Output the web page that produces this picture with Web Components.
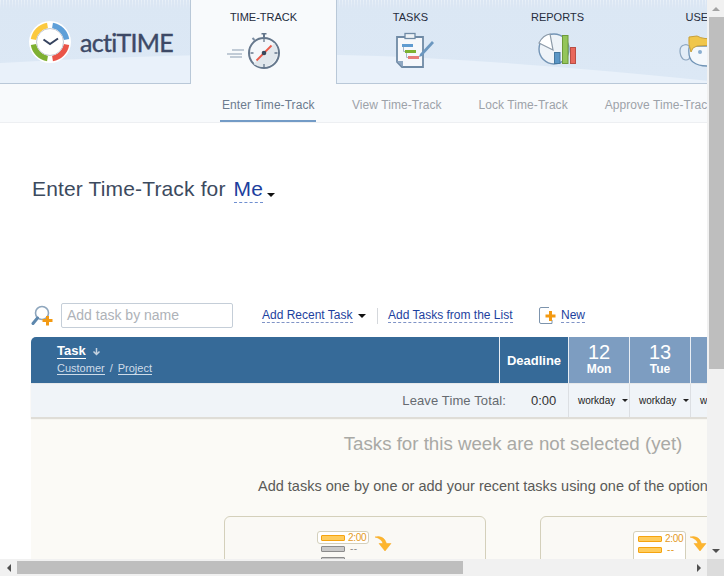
<!DOCTYPE html>
<html>
<head>
<meta charset="utf-8">
<title>actiTIME</title>
<style>
  html,body{margin:0;padding:0;height:100%;overflow:hidden;background:#fff;}
  body{font-family:"Liberation Sans",Arial,sans-serif;}
</style>
</head>
<body>
<at-window>
  <at-header>
    <at-logo slot="logo"></at-logo>
    <at-tab active label="TIME-TRACK"><svg width="80" height="40" viewBox="0 0 80 40">
      <path d="M8 18H20M3 22H18M6 25H18" stroke="#8a9bb0" stroke-width="1.200" fill="none"/>
      <path d="M28.500 6l2 2" stroke="#7d8ea3" stroke-width="2"/>
      <path d="M37.500 1h5v1.500H41v3h-2v-3h-1.500z" fill="#65778c"/>
      <circle cx="40" cy="21" r="15" fill="#f4f7fa" stroke="#65778c" stroke-width="2"/>
      <path d="M50.500 11A15 15 0 0 1 29.500 32z" fill="#e1e7ec"/>
      <path d="M40 7v3M40 32v3M26.500 21h3M50.500 21h3" stroke="#65778c" stroke-width="1.300"/>
      <path d="M32.500 28.500L47.500 13.500" stroke="#ea5a4a" stroke-width="1.800"/>
      <circle cx="40" cy="21" r="2.300" fill="#39485a"/>
    </svg></at-tab>
    <at-tab label="TASKS"><svg width="60" height="40" viewBox="-3 2 60 40">
      <path d="M13 7H39V37H18L13 32z" fill="#f6f8fb" stroke="#6f8aa5" stroke-width="1.800"/>
      <path d="M13 31l6 0 0 6z" fill="#8fa8c2"/>
      <rect x="21" y="3.500" width="10" height="5" fill="#eef2f6" stroke="#6f8aa5" stroke-width="1.300"/>
      <rect x="18" y="14" width="11" height="3" fill="#5f9bd0"/>
      <rect x="21" y="20" width="11" height="3" fill="#7db12f"/>
      <rect x="24" y="26" width="11" height="3" fill="#e77c78"/>
      <path d="M19.500 17v4.500h1.500M22.500 23v4.500h1.500" fill="none" stroke="#a9b7c5"/>
      <path d="M36 24L48 11l2 2L38 26l-3 1z" fill="#6b97bf"/>
    </svg></at-tab>
    <at-tab label="REPORTS"><svg width="60" height="40" viewBox="0 2 60 40">
      <circle cx="26" cy="19" r="15" fill="#eef3f8" stroke="#7394b5" stroke-width="1.400"/>
      <path d="M25 20L11 13Q15 5 22 4z" fill="#fff" stroke="#8c9aa8" stroke-width="1.200"/>
      <rect x="26.500" y="22.500" width="5.500" height="11" fill="#5a96c6" stroke="#44779f"/>
      <rect x="34.500" y="5.500" width="5.500" height="28" fill="#94c55a" stroke="#6e9a3a"/>
      <rect x="42.500" y="17.500" width="5" height="16" fill="#e9685c" stroke="#b84e45"/>
    </svg></at-tab>
    <at-tab label="USERS"><svg width="60" height="40" viewBox="0 0 60 40">
      <path d="M9 13q-4 1-4 6 0 5 3 8 3 2 6 0l2-6-2-7q-2-2-5-1z" fill="#e3edf7" stroke="#8da6bf" stroke-width="1.200"/>
      <path d="M14 16q-1 10 4 14 5 4 14 4h8V14H20z" fill="#f4f8fc" stroke="#6f93b5" stroke-width="1.300"/>
      <circle cx="25" cy="20" r="2" fill="#8aaed0"/>
      <path d="M14 5l8-1q7 4 18 2v7l-18 1-4 2-2 4q-3-8-2-15z" fill="#f0c64a" stroke="#c8a03a"/>
    </svg></at-tab>
  </at-header>

  <at-subnav>
    <at-subitem active>Enter Time-Track</at-subitem>
    <at-subitem>View Time-Track</at-subitem>
    <at-subitem>Lock Time-Track</at-subitem>
    <at-subitem>Approve Time-Track</at-subitem>
  </at-subnav>

  <at-title>Enter Time-Track for</at-title>
  <at-toolbar></at-toolbar>
  <at-grid-head></at-grid-head>
  <at-leave-row></at-leave-row>
  <at-empty></at-empty>
</at-window>

<script>
/* 小工具:用模板字符串建 shadow root */
function shadow(el, html) {
  const template = document.createElement("template");
  template.innerHTML = html;
  el.attachShadow({ mode: "open" }).appendChild(template.content.cloneNode(true));
}

/* 窗口外壳:内容区 + 两条假滚动条 */
class AtWindow extends HTMLElement {
  constructor() {
    super();
    shadow(this, /*html*/ `
      <style>
        :host{display:grid;grid-template-columns:707px 17px;grid-template-rows:559px 17px;width:724px;height:576px;}
        .view{overflow:hidden;background:#fff;}
        .inner{width:1027px;}
        .vbar{background:#f1f1f1;display:flex;flex-direction:column;align-items:flex-end;}
        .vbar .up{height:17px;width:17px;display:flex;align-items:center;justify-content:center;}
        .vbar .thumb{width:15px;height:352px;background:#bebebe;}
        .vbar .fill{flex:1;}
        .vbar .down{height:17px;width:17px;display:flex;align-items:center;justify-content:center;}
        .hbar{background:#f1f1f1;display:flex;align-items:center;}
        .hbar .left,.hbar .right{width:17px;height:17px;display:flex;align-items:center;justify-content:center;}
        .hbar .thumb{width:446px;height:13px;background:#bebebe;}
        .hbar .fill{flex:1;}
        .corner{background:#dcdcdc;}
        i{display:block;width:0;height:0;border-style:solid;border-color:transparent;}
        .t-up{border-width:0 4px 4px;border-bottom-color:#a3a3a3;margin-left:1px;}
        .t-down{border-width:4px 4px 0;border-top-color:#505050;margin-left:1px;}
        .t-left{border-width:4px 4px 4px 0;border-right-color:#505050;}
        .t-right{border-width:4px 0 4px 4px;border-left-color:#505050;}
      </style>
      <div class="view"><div class="inner"><slot></slot></div></div>
      <div class="vbar">
        <div class="up"><i class="t-up"></i></div><div class="thumb"></div><div class="fill"></div>
        <div class="down"><i class="t-down"></i></div>
      </div>
      <div class="hbar">
        <div class="left"><i class="t-left"></i></div><div class="thumb"></div><div class="fill"></div>
        <div class="right"><i class="t-right"></i></div>
      </div>
      <div class="corner"></div>`);
  }
}

/* 顶部蓝色条,弧形亮带是铺在下面的装饰 */
class AtHeader extends HTMLElement {
  constructor() {
    super();
    shadow(this, /*html*/ `
      <style>
        :host{display:block;position:relative;height:84px;}
        .bg{position:absolute;left:0;top:0;width:100%;height:83px;
            background:linear-gradient(#dbe7f4,#dce8f5);border-bottom:1px solid #b9c8d8;box-sizing:content-box;}
        .bg svg{position:absolute;left:0;top:0;}
        .dots{position:absolute;left:0;top:0;width:100%;height:9px;
            background:repeating-linear-gradient(to right,#e9f0f8 0,#e9f0f8 1px,#dbe6f3 1px,#dbe6f3 3px);
            -webkit-mask-image:linear-gradient(#000,transparent);mask-image:linear-gradient(#000,transparent);}
        .row{position:relative;display:flex;height:84px;}
        .logo{width:190px;flex:none;}
      </style>
      <div class="bg">
        <svg width="1027" height="83" viewBox="0 0 1027 83"><path d="M0 63Q190 52 340 55T730 83H0z" fill="#e9f1fa"/></svg>
        <div class="dots"></div>
      </div>
      <div class="row"><div class="logo"><slot name="logo"></slot></div><slot></slot></div>`);
  }
}

class AtLogo extends HTMLElement {
  constructor() {
    super();
    shadow(this, /*html*/ `
      <style>
        :host{display:flex;align-items:center;height:83px;padding-left:29px;gap:9px;box-sizing:border-box;}
        svg{flex:none;}
        span{font:25px Lato,"Noto Sans",sans-serif;letter-spacing:-.7px;color:#3d4966;-webkit-text-stroke:.4px #3d4966;white-space:nowrap;}
      </style>
      <svg width="42" height="42" viewBox="0 0 42 42">
        <circle cx="21" cy="21" r="21" fill="#fff"/>
        <g fill="none" stroke-width="5.500">
          <path d="M4.500 18.500A17 17 0 0 1 18.500 4.500" stroke="#fbc93f"/>
          <path d="M23.500 4.500A17 17 0 0 1 37.500 18.500" stroke="#5e9fd8"/>
          <path d="M37.500 23.500A17 17 0 0 1 23.500 37.500" stroke="#ea5448"/>
          <path d="M18.500 37.500A17 17 0 0 1 4.500 23.500" stroke="#7fb032"/>
        </g>
        <circle cx="21" cy="21" r="13.500" fill="#fff" stroke="#c5c9d2"/>
        <path d="M14.500 18.500L21 23L29 17.500" fill="none" stroke="#36435f" stroke-width="2"/>
      </svg>
      <span>actiTIME</span>`);
  }
}

class AtTab extends HTMLElement {
  constructor() {
    super();
    shadow(this, /*html*/ `
      <style>
        :host{display:block;width:147px;height:83px;box-sizing:border-box;flex:none;text-align:center;
              font-size:11px;color:#252c3c;padding-top:11px;}
        :host([active]){height:84px;background:#f8fafc;border-left:1px solid #b9c8d8;border-right:1px solid #b9c8d8;padding-top:11px;}
        .label{line-height:13px;height:13px;}
        .ic{height:40px;margin-top:8px;display:flex;justify-content:center;}
        ::slotted(svg){display:block;}
      </style>
      <div class="label"></div>
      <div class="ic"><slot></slot></div>`);
    this.shadowRoot.querySelector(".label").textContent = this.getAttribute("label");
  }
}

class AtSubnav extends HTMLElement {
  constructor() {
    super();
    shadow(this, /*html*/ `
      <style>
        :host{display:flex;height:39px;background:#f8fafc;border-bottom:1px solid #edeff2;box-sizing:border-box;padding-left:220px;gap:33px;}
      </style><slot></slot>`);
  }
}

class AtSubitem extends HTMLElement {
  constructor() {
    super();
    shadow(this, /*html*/ `
      <style>
        :host{display:block;height:38px;box-sizing:border-box;padding:14px 2px 0;font-size:12px;line-height:14px;letter-spacing:.06px;color:#9da2a9;white-space:nowrap;}
        :host([active]){color:#6c7b8e;border-bottom:2px solid #739bc6;width:96px;margin-right:1px;}
      </style><slot></slot>`);
  }
}

class AtTitle extends HTMLElement {
  constructor() {
    super();
    shadow(this, /*html*/ `
      <style>
        :host{display:flex;align-items:flex-start;height:180px;box-sizing:border-box;padding:54px 0 0 32px;
              font-size:21px;line-height:24px;letter-spacing:.15px;color:#3c4a5e;}
        .me{margin-left:8px;color:#1d3f9e;border-bottom:1px dashed #6f8fd0;height:25px;}
        .arr{width:0;height:0;border:4px solid transparent;border-top-color:#111;border-bottom:0;margin:16px 0 0 4px;}
      </style>
      <span><slot></slot></span><span class="me">Me</span><span class="arr"></span>`);
  }
}

class AtDash extends HTMLElement {
  constructor() {
    super();
    shadow(this, /*html*/ `
      <style>
        :host{display:inline-block;font-size:12px;line-height:14px;color:#1d3f9e;border-bottom:1px dashed #7f93c6;white-space:nowrap;}
      </style><slot></slot>`);
  }
}

class AtToolbar extends HTMLElement {
  constructor() {
    super();
    shadow(this, /*html*/ `
      <style>
        :host{display:flex;align-items:center;height:25px;margin-bottom:9px;padding-left:31px;}
        svg{display:block;flex:none;}
        .box{width:172px;height:25px;box-sizing:border-box;margin-left:8px;border:1px solid #c5ced8;border-radius:2px;
             padding-left:5px;font-size:14px;line-height:23px;color:#aeb2b8;}
        .recent{margin-left:29px;}
        .arr{width:0;height:0;border:4px solid transparent;border-top-color:#111;border-bottom:0;margin-left:5px;}
        .sep{width:1px;height:16px;background:#d5d8dc;margin:0 10.500px 0 11px;}
        .ni{margin-left:26px;margin-right:5.500px;}
      </style>
      <svg width="22" height="24" viewBox="0 0 22 24">
        <circle cx="11" cy="9" r="6.500" fill="#fff" stroke="#8ea6bd" stroke-width="1.600"/>
        <path d="M6.500 14L2 19.500" stroke="#5d87ad" stroke-width="3" stroke-linecap="round"/>
        <path d="M15 15v-3h3v3h3.500v3H18v3.500h-3V18h-3.500v-3z" fill="#f39a12"/>
      </svg>
      <div class="box">Add task by name</div>
      <at-dash class="recent">Add Recent Task</at-dash><span class="arr"></span>
      <span class="sep"></span>
      <at-dash>Add Tasks from the List</at-dash>
      <svg class="ni" width="17" height="17" viewBox="0 0 17 17">
        <path d="M10 .5H2A1.500 1.500 0 0 0 .5 2v13A1.500 1.500 0 0 0 2 16.500h11V13" fill="#fff" stroke="#7d94ad"/>
        <path d="M10 4h3v3.500h3.500v3H13V14h-3v-3.500H6.500v-3H10z" fill="#f39a12"/>
      </svg>
      <at-dash>New</at-dash>`);
  }
}

class AtDay extends HTMLElement {
  constructor() {
    super();
    shadow(this, /*html*/ `
      <style>
        :host{display:flex;flex-direction:column;align-items:center;justify-content:center;background:#7d9dc1;color:#fff;width:60px;flex:none;
              border-left:1px solid #e9eef4;}
        .n{font-size:20px;line-height:19px;margin-top:-1px;}
        .d{font-size:12px;font-weight:bold;line-height:14px;}
      </style>
      <div class="n"></div><div class="d"></div>`);
    this.shadowRoot.querySelector(".n").textContent = this.getAttribute("n");
    this.shadowRoot.querySelector(".d").textContent = this.getAttribute("d");
  }
}

/* 表头 */
class AtGridHead extends HTMLElement {
  constructor() {
    super();
    shadow(this, /*html*/ `
      <style>
        :host{display:flex;height:46px;margin-left:31px;width:964px;background:#366a98;border-top-left-radius:5px;border-top-right-radius:5px;color:#fff;overflow:hidden;}
        .task{width:468px;flex:none;box-sizing:border-box;padding:7px 0 0 26px;}
        .t{display:flex;align-items:center;font-size:13px;font-weight:bold;line-height:14px;}
        .t b{border-bottom:1px solid #fff;}
        .t svg{margin-left:6px;}
        .s{font-size:11px;line-height:12px;color:#cfdce9;margin-top:3px;display:flex;}
        .s u{text-decoration:none;border-bottom:1px solid #cfdce9;}
        .s span{margin:0 5px;}
        .dl{width:69px;flex:none;box-sizing:border-box;border-left:1px solid #e9eef4;font-size:13px;font-weight:bold;
            display:flex;align-items:center;justify-content:center;}
      </style>
      <div class="task">
        <div class="t"><b>Task</b><svg width="9" height="9" viewBox="0 0 9 9"><path d="M4.500 1v6M1.500 4.500l3 3 3-3" fill="none" stroke="#c6d3e0" stroke-width="1.500"/></svg></div>
        <div class="s"><u>Customer</u><span>/</span><u>Project</u></div>
      </div>
      <div class="dl">Deadline</div>
      <at-day n="12" d="Mon"></at-day>
      <at-day n="13" d="Tue"></at-day>
      <at-day></at-day>
      <at-day></at-day>
      <at-day></at-day>`);
  }
}

class AtKind extends HTMLElement {
  constructor() {
    super();
    shadow(this, /*html*/ `
      <style>
        :host{display:flex;align-items:center;width:60px;box-sizing:content-box;flex:none;border-left:1px solid #dcdfe3;font-size:10px;color:#222;padding-left:0;}
        span{margin-left:9px;width:44px;}
        i{width:0;height:0;border:3px solid transparent;border-top-color:#222;border-bottom:0;}
      </style><span>workday</span><i></i>`);
  }
}

class AtLeaveRow extends HTMLElement {
  constructor() {
    super();
    shadow(this, /*html*/ `
      <style>
        :host{display:flex;height:34px;margin-left:31px;width:964px;background:#f0f4f8;border-top:1px solid #e6e8ea;box-sizing:border-box;
              box-shadow:0 2px 1px #dfddd7;position:relative;}
        .l{width:537px;flex:none;display:flex;align-items:center;justify-content:flex-end;box-sizing:border-box;padding-right:12px;font-size:13px;letter-spacing:.12px;color:#666a70;}
        .l b{font-weight:normal;color:#333;width:25px;margin-left:25px;white-space:nowrap;letter-spacing:0;}
      </style>
      <div class="l">Leave Time Total:<b>0:00</b></div>
      <at-kind></at-kind><at-kind></at-kind><at-kind></at-kind>`);
  }
}

/* 小图:两行或三行的进度条 + 箭头 */
class AtTip extends HTMLElement {
  constructor() {
    super();
    shadow(this, /*html*/ `
      <style>
        :host{display:block;width:262px;height:90px;box-sizing:border-box;border:1px solid #d4d0bb;border-radius:6px;background:#faf9f5;padding-top:14px;position:relative;}
        .wrap{display:flex;align-items:flex-start;}
        .pic{font-size:10px;color:#e49a1c;}
        .box{border:1px solid #d4d0bb;border-radius:3px;background:#fff;display:flex;flex-direction:column;gap:5px;box-sizing:border-box;}
        .row{display:flex;align-items:center;height:6px;}
        .bar{width:24px;height:6px;box-sizing:border-box;border:1px solid #f5a410;background:#ffcc5c;border-radius:1px;flex:none;}
        .bar.g{border-color:#8c8c8c;background:#c9c9c9;}
        .row span{margin-left:3px;line-height:6px;white-space:nowrap;letter-spacing:-.3px;}
        .row .dash{margin-left:5px;letter-spacing:.5px;}
        .row .dash.g{color:#8c8c8c;}
        svg{display:block;flex:none;}
        :host([kind="a"]) .wrap{margin-left:92px;}
        :host([kind="a"]) .box{width:52px;height:13px;padding:3px 3px;overflow:visible;}
        :host([kind="a"]) .below{margin:2px 0 0 4px;display:flex;flex-direction:column;gap:5px;}
        :host([kind="a"]) svg{margin:5px 0 0 6px;}
        :host([kind="b"]) .wrap{margin-left:92px;}
        :host([kind="b"]) .box{width:53px;height:50px;padding:4px;}
        :host([kind="b"]) svg{margin:5px 0 0 4px;}
      </style>
      <div class="wrap">
        <div class="pic"></div>
        <svg width="18" height="18" viewBox="0 0 18 18"><path d="M0 1Q9-1 11.500 7.500H16L10 15 4 7.500h4Q6.500 2.500 0 1z" fill="#fdb52e" stroke="#f6a81e" stroke-width=".5"/></svg>
      </div>`);
    const pic = this.shadowRoot.querySelector(".pic");
    if (this.getAttribute("kind") == "a") {
      pic.innerHTML = `<div class="box"><div class="row"><div class="bar"></div><span>2:00</span></div></div>
        <div class="below"><div class="row"><div class="bar g"></div><span class="dash g">--</span></div>
        <div class="row"><div class="bar g"></div></div></div>`;
    } else {
      pic.innerHTML = `<div class="box"><div class="row"><div class="bar"></div><span>2:00</span></div>
        <div class="row"><div class="bar"></div><span class="dash">--</span></div></div>`;
    }
  }
}

class AtEmpty extends HTMLElement {
  constructor() {
    super();
    shadow(this, /*html*/ `
      <style>
        :host{display:block;margin-left:31px;width:964px;background:#fbfaf6;height:160px;text-align:center;overflow:hidden;}
        h2{margin:16px 0 0;font-size:18.700px;font-weight:normal;line-height:22px;color:#a9a9a5;}
        p{margin:21px 0 0;padding-right:11px;font-size:14.500px;line-height:20px;color:#5a5a58;white-space:nowrap;}
        .cards{display:flex;justify-content:center;gap:54px;margin-top:20px;}
      </style>
      <h2>Tasks for this week are not selected (yet)</h2>
      <p>Add tasks one by one or add your recent tasks using one of the options below</p>
      <div class="cards"><at-tip kind="a"></at-tip><at-tip kind="b"></at-tip></div>`);
  }
}

customElements.define("at-window", AtWindow);
customElements.define("at-header", AtHeader);
customElements.define("at-logo", AtLogo);
customElements.define("at-tab", AtTab);
customElements.define("at-subnav", AtSubnav);
customElements.define("at-subitem", AtSubitem);
customElements.define("at-title", AtTitle);
customElements.define("at-dash", AtDash);
customElements.define("at-toolbar", AtToolbar);
customElements.define("at-day", AtDay);
customElements.define("at-grid-head", AtGridHead);
customElements.define("at-kind", AtKind);
customElements.define("at-leave-row", AtLeaveRow);
customElements.define("at-tip", AtTip);
customElements.define("at-empty", AtEmpty);
</script>
</body>
</html>
